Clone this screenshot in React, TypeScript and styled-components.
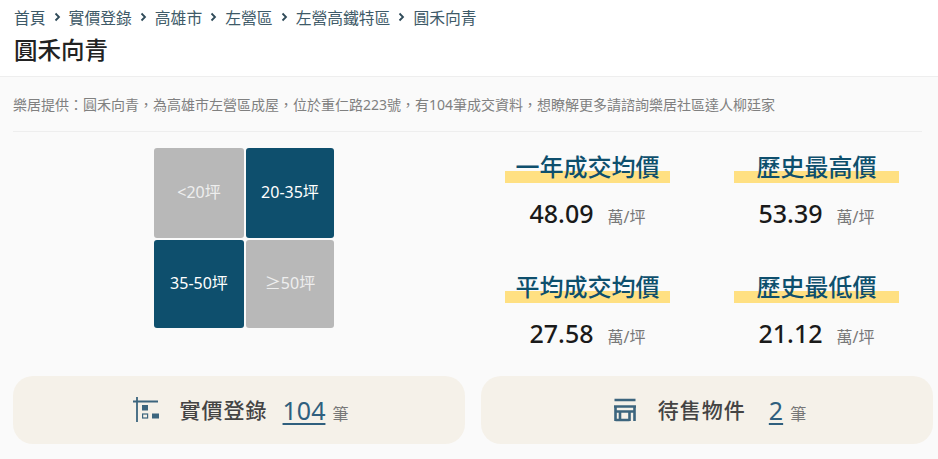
import React from "react";
import styled, { createGlobalStyle } from "styled-components";

const GlobalStyle = createGlobalStyle`
  html, body {
    margin: 0;
    padding: 0;
    background: #fafafa;
    font-family: "Noto Sans", "Noto Sans CJK TC", sans-serif;
  }
`;

const Page = styled.div`
  width: 938px;
  height: 459px;
  overflow: hidden;
`;

const Header = styled.header`
  height: 77px;
  box-sizing: border-box;
  padding: 7px 14px 0;
  background: #fff;
  border-bottom: 1px solid #eeeeee;
`;

const Crumbs = styled.nav`
  display: flex;
  align-items: center;
  height: 20px;
  font-size: 15.8px;
  color: #3e5a68;
`;

const Sep = styled.svg`
  width: 23px;
  height: 10px;
  fill: none;
  stroke: #2f4a58;
  stroke-width: 1.8;
`;

const Title = styled.h1`
  margin: 5px 0 0;
  font-size: 23.5px;
  line-height: 36px;
  font-weight: 500;
  color: #222;
`;

const Intro = styled.p`
  margin: 0 16px 0 13px;
  height: 55px;
  box-sizing: border-box;
  border-bottom: 1px solid #eeeeee;
  font-size: 14px;
  line-height: 56px;
  color: #808080;
  white-space: nowrap;
`;

const Summary = styled.section`
  display: flex;
  height: 244px;
  box-sizing: border-box;
  padding-top: 16px;
`;

const SizeGrid = styled.div`
  display: grid;
  grid-template-columns: 90px 88px;
  grid-template-rows: 90px 88px;
  gap: 2px;
  margin-left: 154px;
  height: 180px;
`;

const SizeCell = styled.div<{ $active: boolean }>`
  display: flex;
  align-items: center;
  justify-content: center;
  box-sizing: border-box;
  padding-bottom: 4px;
  border-radius: 3px;
  font-size: 16px;
  color: ${(p) => (p.$active ? "#fff" : "#eeeeee")};
  background: ${(p) => (p.$active ? "#0e4f6d" : "#b8b8b8")};
`;

const Stats = styled.div`
  display: grid;
  grid-template-columns: 165px 165px;
  grid-template-rows: 120px 90px;
  column-gap: 64px;
  margin-left: 171px;
  margin-top: 3px;
`;

const Stat = styled.div`
  display: flex;
  flex-direction: column;
  align-items: center;
`;

const StatLabel = styled.div`
  width: 100%;
  height: 32px;
  text-align: center;
  font-size: 24px;
  line-height: 32px;
  font-weight: 500;
  color: #0e4f6d;
  background: linear-gradient(#ffe082, #ffe082) no-repeat 0 20px / 100% 13px;
`;

const StatValue = styled.div`
  display: flex;
  align-items: baseline;
  margin-top: 13px;
  font-size: 25px;
  line-height: 34px;
  font-weight: 500;
  color: #1a1a1a;
`;

const Unit = styled.span`
  margin-left: 14px;
  font-size: 16px;
  font-weight: 400;
  color: #777;
`;

const Cards = styled.div`
  display: grid;
  grid-template-columns: 452px 452px;
  gap: 16px;
  margin-left: 13px;
`;

const Card = styled.div`
  height: 68px;
  box-sizing: border-box;
  padding-left: 3px;
  display: flex;
  align-items: center;
  justify-content: center;
  border-radius: 20px;
  background: #f5f1e9;
`;

const CardIcon = styled.svg`
  width: 28px;
  height: 26px;
  color: #3c657e;
`;

const CardName = styled.span`
  margin-left: 19px;
  padding-bottom: 2px;
  font-size: 21px;
  font-weight: 500;
  letter-spacing: 1px;
  color: #444;
`;

const Count = styled.a<{ $gap: number }>`
  margin-left: ${(p) => p.$gap}px;
  font-size: 25px;
  line-height: 32px;
  color: #2f5f7e;
  text-decoration: underline;
  text-underline-offset: 3px;
`;

const CountUnit = styled.span`
  margin-left: 7px;
  padding-top: 5px;
  font-size: 16px;
  color: #777;
`;

const Chevron = () => (
  <Sep viewBox="0 0 23 10">
    <path d="M9.5 1.5 13 5l-3.5 3.5" />
  </Sep>
);

const crumbs = ["首頁", "實價登錄", "高雄市", "左營區", "左營高鐵特區", "圓禾向青"];

const sizes = [
  { label: "<20坪", active: false },
  { label: "20-35坪", active: true },
  { label: "35-50坪", active: true },
  { label: "≥50坪", active: false },
];

const stats = [
  { label: "一年成交均價", value: "48.09" },
  { label: "歷史最高價", value: "53.39" },
  { label: "平均成交均價", value: "27.58" },
  { label: "歷史最低價", value: "21.12" },
];

export default function App() {
  return (
    <Page>
      <GlobalStyle />
      <Header>
        <Crumbs>
          {crumbs.map((c, i) => (
            <React.Fragment key={c}>
              {i > 0 && <Chevron />}
              <span>{c}</span>
            </React.Fragment>
          ))}
        </Crumbs>
        <Title>圓禾向青</Title>
      </Header>
      <Intro>
        樂居提供：圓禾向青，為高雄市左營區成屋，位於重仁路223號，有104筆成交資料，想瞭解更多請諮詢樂居社區達人柳廷家
      </Intro>
      <Summary>
        <SizeGrid>
          {sizes.map((s) => (
            <SizeCell key={s.label} $active={s.active}>
              {s.label}
            </SizeCell>
          ))}
        </SizeGrid>
        <Stats>
          {stats.map((s) => (
            <Stat key={s.label}>
              <StatLabel>{s.label}</StatLabel>
              <StatValue>
                {s.value}
                <Unit>萬/坪</Unit>
              </StatValue>
            </Stat>
          ))}
        </Stats>
      </Summary>
      <Cards>
        <Card>
          <CardIcon viewBox="0 0 28 26">
            <path d="M0 4.5h25M4 0v25" stroke="currentColor" strokeWidth="1.8" fill="none" />
            <rect x="9" y="8" width="6" height="5.5" fill="currentColor" />
            <rect x="9.6" y="17" width="5" height="4" stroke="currentColor" strokeWidth="1.2" fill="none" />
            <rect x="19" y="16.5" width="7" height="5" fill="currentColor" />
          </CardIcon>
          <CardName>實價登錄</CardName>
          <Count $gap={15}>104</Count>
          <CountUnit>筆</CountUnit>
        </Card>
        <Card>
          <CardIcon viewBox="0 0 28 26">
            <path
              d="M3.5 3h21M3 9.5h22M4.5 9v15M23.5 9v15M4.5 14.5h19M9 14.5V24M18.5 14.5V24M4.5 23h14"
              stroke="currentColor"
              strokeWidth="2.6"
              fill="none"
            />
          </CardIcon>
          <CardName>待售物件</CardName>
          <Count $gap={23}>2</Count>
          <CountUnit>筆</CountUnit>
        </Card>
      </Cards>
    </Page>
  );
}
